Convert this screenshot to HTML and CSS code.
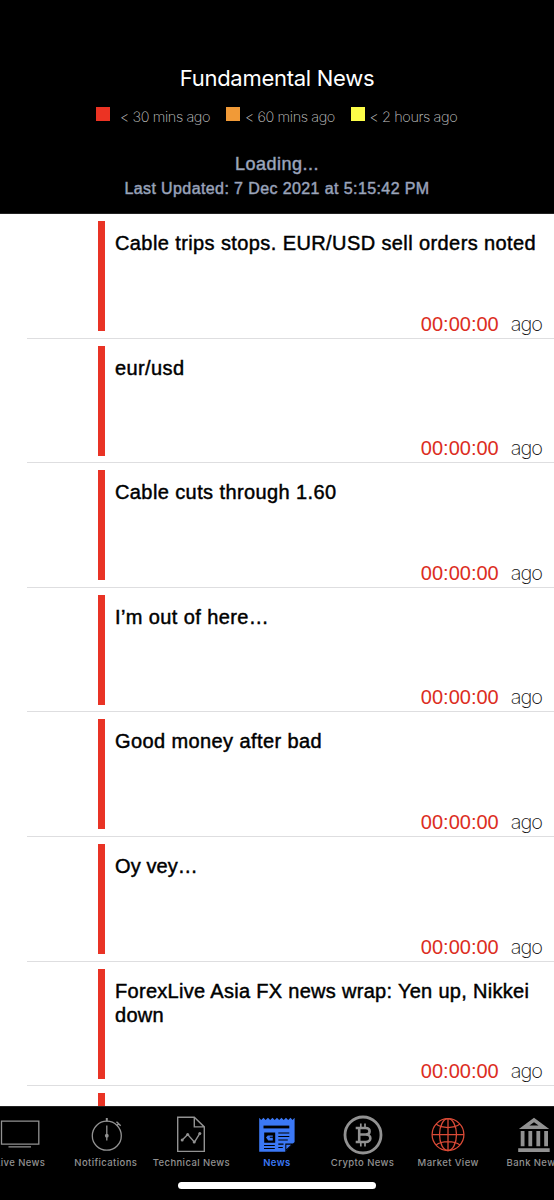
FILE: index.html
```html
<!DOCTYPE html>
<html lang="en">
<head>
<meta charset="utf-8">
<title>Fundamental News</title>
<link rel="stylesheet" href="styles.css">
</head>
<body>
<div class="app">
  <header class="header">
    <h1 class="heading">Fundamental News</h1>
    <div class="legend">
      <span class="swatch red"></span><span class="legend-text first">&lt; 30 mins ago</span>
      <span class="swatch orange"></span><span class="legend-text">&lt; 60 mins ago</span>
      <span class="swatch yellow"></span><span class="legend-text">&lt; 2 hours ago</span>
    </div>
    <p class="loading">Loading...</p>
    <p class="updated">Last Updated: 7 Dec 2021 at 5:15:42 PM</p>
  </header>
  <main class="list">
    <article class="row"><div class="bar"></div><div class="content"><h2 class="title">Cable trips stops. EUR/USD sell orders noted</h2><p class="time"><span class="clock">00:00:00</span><span class="ago">ago</span></p></div></article>
    <article class="row"><div class="bar"></div><div class="content"><h2 class="title">eur/usd</h2><p class="time"><span class="clock">00:00:00</span><span class="ago">ago</span></p></div></article>
    <article class="row"><div class="bar"></div><div class="content"><h2 class="title">Cable cuts through 1.60</h2><p class="time"><span class="clock">00:00:00</span><span class="ago">ago</span></p></div></article>
    <article class="row"><div class="bar"></div><div class="content"><h2 class="title">I’m out of here…</h2><p class="time"><span class="clock">00:00:00</span><span class="ago">ago</span></p></div></article>
    <article class="row"><div class="bar"></div><div class="content"><h2 class="title">Good money after bad</h2><p class="time"><span class="clock">00:00:00</span><span class="ago">ago</span></p></div></article>
    <article class="row"><div class="bar"></div><div class="content"><h2 class="title tight">Oy vey…</h2><p class="time"><span class="clock">00:00:00</span><span class="ago">ago</span></p></div></article>
    <article class="row"><div class="bar"></div><div class="content"><h2 class="title snug">ForexLive Asia FX news wrap: Yen up, Nikkei<br>down</h2><p class="time"><span class="clock">00:00:00</span><span class="ago">ago</span></p></div></article>
    <article class="row"><div class="bar"></div></article>
  </main>
  <footer class="footer">
    <nav class="tabs">
      <div class="tab">
        <svg class="icon" viewBox="0 0 40 40"><path d="M1.5 6.2h37.3v23H1.5zM8.5 31.800h22.500" fill="none" stroke="currentColor" stroke-width="1.3"/></svg>
        <span>Live News</span>
      </div>
      <div class="tab">
        <svg class="icon" viewBox="0 0 40 40"><g fill="none" stroke="currentColor"><circle cx="20.800" cy="20.700" r="14.500" stroke-width="1.3"/><path d="M20.800 10.500v15" stroke-width="1.3"/><path d="M20.800 3v3.500" stroke-width="2"/><path d="M30.500 6.700l4.200 4M30.900 10.500l2.200-2.200" stroke-width="1.4"/></g><circle cx="20.800" cy="20.700" r="1.9" fill="currentColor"/></svg>
        <span>Notifications</span>
      </div>
      <div class="tab">
        <svg class="icon" viewBox="0 0 40 40"><g fill="none" stroke="currentColor" stroke-width="1.4"><path d="M6.700 2.200h16.600L33.300 11.900v24.500H6.700zM23.300 2.200v9.700h10"/><path d="M11.200 25.100l5.500-5.500 6.800 7.500 5.200-8.500"/></g><g fill="currentColor"><circle cx="11.200" cy="25.100" r="1.500"/><circle cx="16.700" cy="19.600" r="1.500"/><circle cx="23.200" cy="27.100" r="1.500"/><circle cx="28.800" cy="18.600" r="1.500"/></g></svg>
        <span>Technical News</span>
      </div>
      <div class="tab active">
        <svg class="icon" viewBox="0 0 40 40"><path fill="currentColor" d="M2.200 2.800L4.200 5 6.500 2.800 8.600 5 11 2.800 13.200 5 15.500 2.800 17.700 5 20 2.800 22.200 5 24.500 2.800 26.700 5 29 2.800 31.200 5 33.500 2.800 35.500 5 37.600 2.800v24.300L28 36.700H2.200z"/><path d="M6.500 12h25.800" stroke="#000" stroke-width="2.800"/><path d="M7.200 17.500h11v10.300h-11z" fill="#000"/><path d="M21.300 18h11M21.300 21.500h11M21.300 25h9.500M21.300 29.200h5.200M7 30.500h10.800M7 33.500h10.800M21.300 32.500h4.500" fill="none" stroke="#000" stroke-width="1.200"/><path d="M9 22.500l1.800-2h5v1.300h-3v1h3v2.700h-4.500z" fill="currentColor"/><path d="M28.300 36.500v-8h8.600z" fill="#000"/><path d="M29.300 34.200v-4.500h4.800z" fill="currentColor"/></svg>
        <span>News</span>
      </div>
      <div class="tab">
        <svg class="icon" viewBox="0 0 40 40"><g fill="none" stroke="currentColor"><circle cx="20" cy="20" r="18" stroke-width="2.800"/><path d="M16.200 13v14M12.700 13h10c5.200 0 5.200 6.500 0 6.500h-7M22.700 19.500c6.200 0 6.200 7.500 0 7.500h-10" stroke-width="2.600"/><path d="M17.800 8.500v4.500M22 8.500v4.500M17.800 27v4.500M22 27v4.500" stroke-width="1.700"/></g></svg>
        <span>Crypto News</span>
      </div>
      <div class="tab market">
        <svg class="icon" viewBox="0 0 40 40"><g fill="none" stroke="#d94a36" stroke-width="1.300"><circle cx="20" cy="19.600" r="15.900"/><ellipse cx="20" cy="19.600" rx="8.500" ry="15.900"/><path d="M20 3.700v31.800M4.100 19.600h31.800M8 9.100c6 4.600 18 4.600 24 0M8 30.100c6-4.600 18-4.600 24 0"/></g></svg>
        <span>Market View</span>
      </div>
      <div class="tab">
        <svg class="icon" viewBox="0 0 40 40"><path fill="currentColor" fill-rule="evenodd" d="M20 2.700L35.200 13.900H4.900zM15.400 10.500h9.200L20 7.200zM6.700 16h3.800v15.300H6.700zM14.400 16h3.800v15.300h-3.800zM22.400 16h3.800v15.300h-3.800zM30.200 16h3.800v15.300h-3.800zM4.200 33.300h31.500v3.800H4.200z"/></svg>
        <span>Bank News</span>
      </div>
    </nav>
    <div class="home"></div>
  </footer>
</div>
</body>
</html>
```
FILE: styles.css
```css
* { box-sizing: border-box; }
body { margin: 0; background: #000; font-family: "Liberation Sans", Arial, sans-serif; }
h1, h2, p { margin: 0; font-weight: 400; }
.app { width: 554px; height: 1200px; display: flex; flex-direction: column; overflow: hidden; }
.header { height: 214px; flex: none; background: #000; padding-top: 64px; text-align: center; border-bottom: 1px solid #222; }
.heading { font-family: Inter, sans-serif; color: #fff; font-size: 22px; line-height: 28px; letter-spacing: -0.28px; }
.legend { display: flex; align-items: center; height: 20px; margin-top: 13px; padding-left: 96px; padding-top: 1px; }
.swatch { width: 14px; height: 14px; flex: none; margin-top: -4px; }
.red { background: #ec3323; }
.orange { background: #f19a37; }
.yellow { background: #fcfd48; }
.legend-text { font-family: Inter, sans-serif; font-weight: 200; font-size: 14.5px; color: #c4c4c4; width: 90px; margin: 1px 15.5px 0 5px; text-align: left; white-space: nowrap; letter-spacing: -0.42px; }
.legend-text.first { margin-left: 10px; margin-right: 16px; }
.loading, .updated { color: #a9b0c0; font-weight: 400; -webkit-text-stroke: 0.55px #8490aa; }
.loading { font-size: 18px; line-height: 22px; margin-top: 28px; letter-spacing: 0.5px; }
.updated { font-size: 16px; line-height: 22px; margin-top: 3px; letter-spacing: 0.4px; }
.list { height: 892px; flex: none; overflow: hidden; background: #fff; }
.row { height: 124.6px; margin-left: 27px; border-bottom: 1px solid #dedee0; display: flex; padding: 7px 12px 0 71px; }
.bar { width: 7px; height: 110px; flex: none; background: #e93325; }
.content { flex: 1; margin-left: 10px; padding-top: 10px; display: flex; flex-direction: column; }
.title { font-size: 20px; line-height: 24.5px; height: 79px; color: #000; letter-spacing: 0.4px; -webkit-text-stroke: 0.45px #000; white-space: nowrap; }
.title.snug { letter-spacing: 0.3px; }
.title.tight { letter-spacing: 0.1px; }
.time { display: flex; justify-content: flex-end; font-size: 20px; line-height: 28px; }
.clock { color: #dc2d22; }
.ago { margin-left: 12px; font-family: Inter, sans-serif; font-weight: 200; color: #111; letter-spacing: -1px; }
.footer { height: 94px; flex: none; background: #000; border-top: 1px solid #222; padding-top: 8px; }
.tabs { display: flex; justify-content: center; }
.tab { width: 85.6px; flex: none; display: flex; flex-direction: column; align-items: center; color: #929292; font-family: Inter, sans-serif; font-size: 9.5px; font-weight: 500; line-height: 14px; letter-spacing: 0.4px; white-space: nowrap; }
.tab.active { color: #3b78f5; font-weight: 600; }
.tab span { margin-top: 1px; }
.icon { width: 40px; height: 40px; display: block; }
.home { width: 198px; height: 7px; border-radius: 4px; background: #fff; margin: 12px auto 0; }
```
